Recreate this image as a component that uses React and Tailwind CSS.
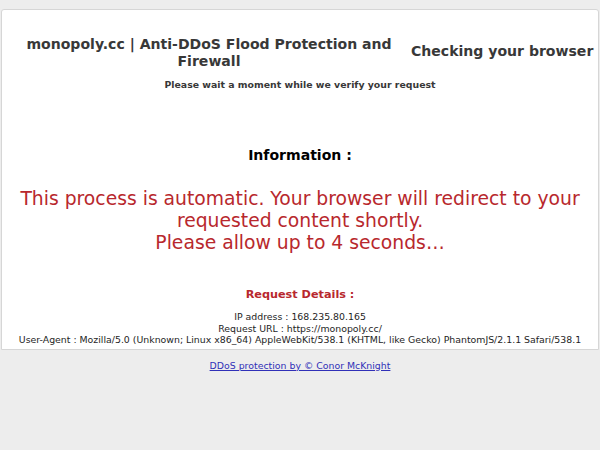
export default function App() {
  const font = { fontFamily: '"DejaVu Sans", Verdana, sans-serif' };
  return (
    <div className="min-h-[450px] w-[600px] bg-[#ededed] pt-[9px]" style={font}>
      <div className="ml-px w-[598px] rounded-t-[3px] border border-[#d6d6d6] bg-white pb-[3px]">
        <div className="mt-[26px] flex items-start">
          <div className="w-[406px] pl-[8px] text-center text-[14.06px] font-bold leading-[17px] text-[#383838]">
            monopoly.cc | Anti-DDoS Flood Protection and Firewall
          </div>
          <div className="mt-[7px] flex-1 pl-[3px] text-[14.06px] font-bold leading-[17px] text-[#383838] whitespace-nowrap">
            Checking your browser
          </div>
        </div>
        <div className="mt-[9px] text-center text-[9.375px] font-bold leading-[12px] text-[#383838]">
          Please wait a moment while we verify your request
        </div>
        <div className="mt-[56px] text-center text-[14.06px] font-bold leading-[17px] text-black">
          Information :
        </div>
        <div className="mt-[24px] px-[10px] text-center text-[18.75px] leading-[22px] text-[#b8282d]">
          This process is automatic. Your browser will redirect to your requested content shortly.
          <br />
          Please allow up to 4 seconds…
        </div>
        <div className="mt-[34px] text-center text-[11.25px] font-bold leading-[14px] text-[#b8282d]">
          Request Details :
        </div>
        <div className="mt-[9px] text-center text-[9.375px] leading-[11.5px] text-[#1e1e1e]">
          <div>IP address : 168.235.80.165</div>
          <div>Request URL : https://monopoly.cc/</div>
          <div className="whitespace-nowrap">
            User-Agent : Mozilla/5.0 (Unknown; Linux x86_64) AppleWebKit/538.1 (KHTML, like Gecko) PhantomJS/2.1.1 Safari/538.1
          </div>
        </div>
      </div>
      <div className="mt-[10px] text-center text-[9.375px] leading-[12px]">
        <a href="#" className="text-[#3030b8] underline">
          DDoS protection by © Conor McKnight
        </a>
      </div>
    </div>
  );
}
